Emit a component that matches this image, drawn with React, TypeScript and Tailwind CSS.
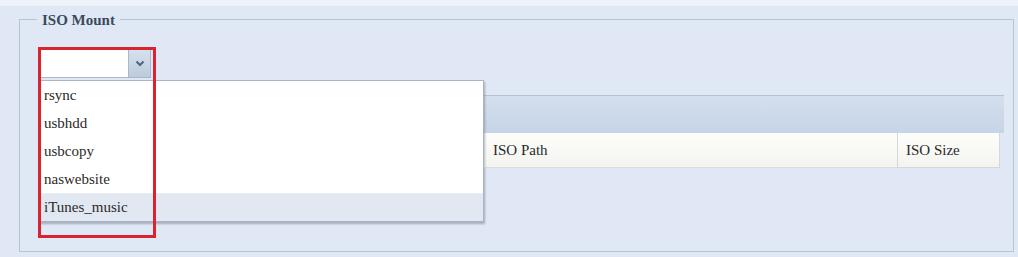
import React from 'react';

const items = ['rsync', 'usbhdd', 'usbcopy', 'naswebsite', 'iTunes_music'];
// font set on the text spans themselves, single family name
const serif = { fontFamily: "'Liberation Serif'" };

export default function App() {
  return (
    <div className="relative w-[1018px] h-[257px] overflow-hidden bg-[#e0e8f5] pt-[19px] pl-[19px]">
      {/* light strip at the top */}
      <div className="absolute left-0 top-0 w-full h-[6px] bg-[#eef2f9]" />

      <div className="relative w-[995px] h-[233px] border border-[#b8c4d3] px-[18px] pt-[29px]">
        <div className="absolute left-[17px] top-[-10px] px-[5px] bg-[#e0e8f5] text-[15px] leading-[18px] font-bold text-[#3b4b5c]">
          <span style={serif}>ISO Mount</span>
        </div>

        {/* select */}
        <div className="ml-[2px] flex h-[29px] w-[111px] border border-[#a9b7c8]">
          <div className="flex-1 bg-white" />
          <div className="w-[22px] flex items-center justify-center bg-gradient-to-b from-[#d6e1ee] to-[#bccbdd] border-l border-[#a9b7c8]">
            <svg width="10" height="7" viewBox="0 0 10 7">
              <path d="M1.5 1.5 L5 5 L8.5 1.5" fill="none" stroke="#4c6784" strokeWidth="2" />
            </svg>
          </div>
        </div>

        {/* table */}
        <div className="mt-[17px] w-[966px]">
          <div className="h-[38px] bg-gradient-to-b from-[#d4dfee] to-[#c6d4e7] border-t border-[#b4c2d4]" />
          <div className="flex h-[35px] w-[962px] text-[15px] text-[#2a2a2a]">
            <div className="w-[447px] bg-[#fbfbf8]" />
            <div className="w-[412px] flex items-center pl-[8px] bg-gradient-to-b from-[#fdfdfb] to-[#f4f4ef] border-b border-[#d8dde4]">
              <span style={serif}>ISO Path</span>
            </div>
            <div className="w-[103px] flex items-center pl-[8px] bg-gradient-to-b from-[#fdfdfb] to-[#f4f4ef] border-l border-r border-b border-[#d3d8df]">
              <span style={serif}>ISO Size</span>
            </div>
          </div>
        </div>

        {/* open dropdown list */}
        <div className="absolute left-[18px] top-[60px] w-[446px] bg-white border border-[#aab5c3] shadow-[1px_2px_2px_rgba(90,100,120,0.45)] text-[15px] text-[#2a2a2a]">
          {items.map((it, i) => (
            <div
              key={it}
              className={`h-[28px] flex items-center pl-[5px] ${i === items.length - 1 ? 'bg-[#e1e8f2] border-t border-[#e8ecf2]' : ''}`}
            >
              <span style={serif}>{it}</span>
            </div>
          ))}
        </div>

        {/* red highlight box */}
        <div className="absolute left-[18px] top-[27px] w-[118px] h-[191px] border-[3px] border-[#d9232e]" />
      </div>
    </div>
  );
}
